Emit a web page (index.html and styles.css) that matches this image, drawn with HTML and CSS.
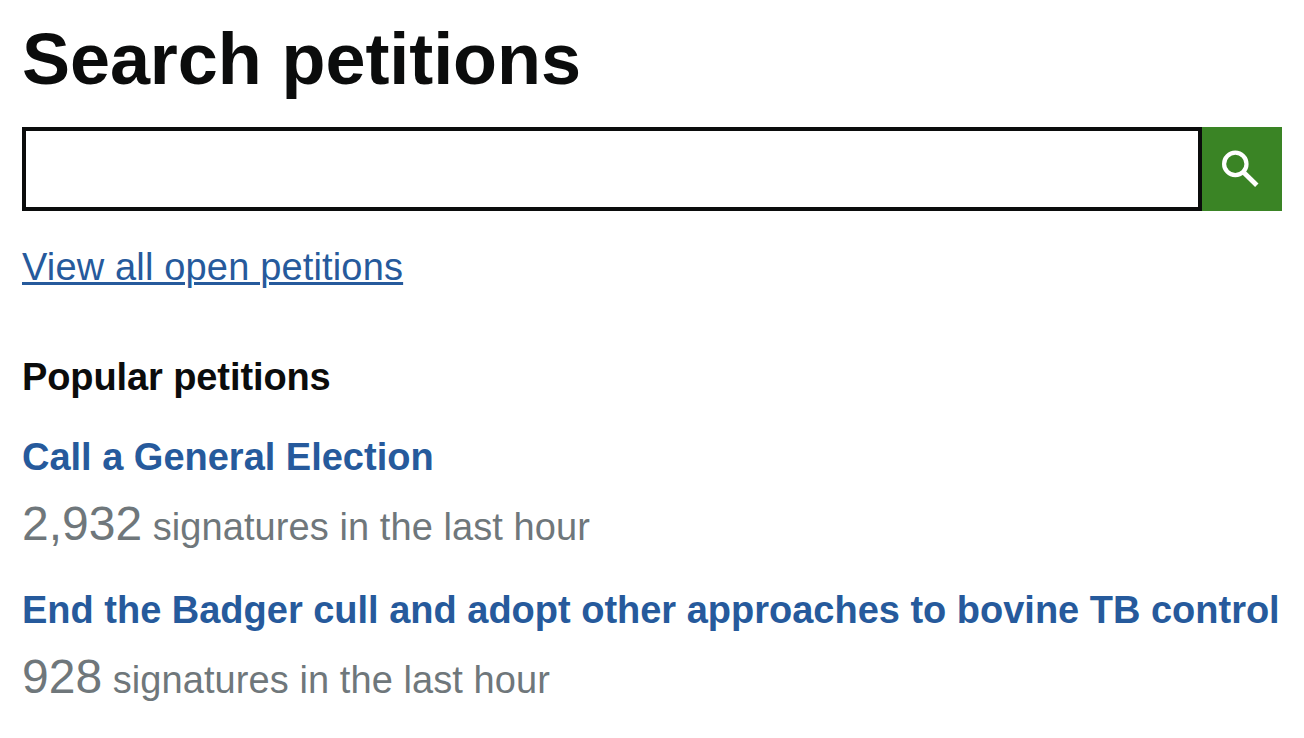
FILE: index.html
```html
<!DOCTYPE html>
<html lang="en">
<head>
    <meta charset="UTF-8">
    <meta name="viewport" content="width=device-width, initial-scale=1.0">
    <title>Petitions</title>
    <link rel="stylesheet" href="styles.css">
</head>
<body>

<main>
    <h1 class="page-title">Search petitions</h1>

    <form class="search" action="#">
        <input type="search" class="search-input" name="q" aria-label="Search petitions">
        <button type="submit" class="search-submit" aria-label="Search">
            <svg width="40" height="40" viewBox="0 0 40 40" fill="none" stroke="#fff">
                <circle cx="13.3" cy="14.9" r="11.2" stroke-width="4.2"/>
                <path d="M21.5 23.2L34.8 36.2" stroke-width="4.8"/>
            </svg>
        </button>
    </form>

    <p class="view-all"><a href="#">View all open petitions</a></p>

    <section class="popular">
        <h2 class="popular-title">Popular petitions</h2>
        <ol class="petitions">
            <li class="petition">
                <h3><a href="#">Call a General Election</a></h3>
                <p><span class="count">2,932</span> <span class="label">signatures in the last hour</span></p>
            </li>
            <li class="petition">
                <h3><a href="#">End the Badger cull and adopt other approaches to bovine TB control</a></h3>
                <p><span class="count">928</span> <span class="label">signatures in the last hour</span></p>
            </li>
        </ol>
    </section>
</main>

</body>
</html>
```

FILE: styles.css
```css
* {
    box-sizing: border-box;
}
body {
    margin: 0;
    background-color: #fff;
    color: #0b0c0c;
    font-family: "Liberation Sans", Arial, sans-serif;
    font-size: 38px;
}
main {
    padding: 19px 22px 0;
}
h1, h2, h3, p, ol {
    margin: 0;
    padding: 0;
}
.page-title {
    font-size: 72px;
    line-height: 80px;
    letter-spacing: -0.08px;
    height: 108px;
}
.search {
    display: flex;
    height: 84px;
}
.search-input {
    flex: 1;
    min-width: 0;
    border: 4px solid #0b0c0c;
    border-radius: 0;
    background-color: #fff;
    padding: 0 12px;
    font: inherit;
    appearance: none;
}
.search-submit {
    display: flex;
    align-items: center;
    justify-content: center;
    width: 80px;
    border: 0;
    padding: 0;
    background-color: #3a8425;
    cursor: pointer;
}
.view-all {
    margin-top: 31px;
    line-height: 50px;
    letter-spacing: 0.16px;
}
.view-all a {
    color: #265a9c;
    text-decoration-thickness: 3px;
    text-underline-offset: 2px;
}
.popular {
    margin-top: 60px;
}
.popular-title {
    font-size: 38px;
    line-height: 50px;
    letter-spacing: -0.1px;
}
.petitions {
    list-style: none;
    margin-top: 30px;
}
.petition {
    height: 153px;
}
.petition h3 {
    font-size: 38px;
    line-height: 50px;
    letter-spacing: -0.01px;
    white-space: nowrap;
}
.petition h3 a {
    color: #265a9c;
    text-decoration: none;
}
.petition p {
    color: #6f777b;
    margin-top: 12px;
    line-height: 60px;
}
.count {
    font-size: 48px;
}
.label {
    letter-spacing: 0.08px;
}
```
